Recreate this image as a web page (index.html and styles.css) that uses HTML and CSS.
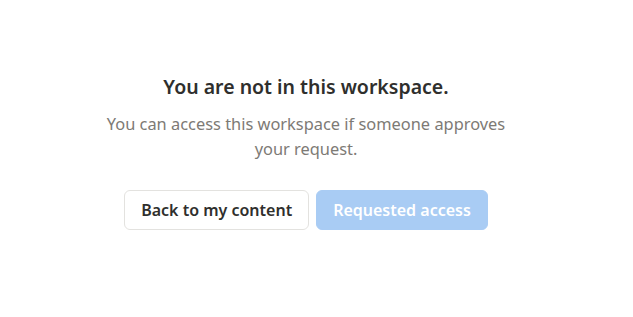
FILE: index.html
```html
<!DOCTYPE html>
<html lang="en">
<head>
    <meta charset="UTF-8">
    <meta name="viewport" content="width=device-width, initial-scale=1.0">
    <title>Workspace access</title>
    <link rel="stylesheet" href="styles.css">
</head>
<body>
    <div class="notice">
        <h1 class="title">You are not in this workspace.</h1>
        <p class="subtitle">You can access this workspace if someone approves your request.</p>
        <div class="actions">
            <button class="btn btn-back">Back to my content</button>
            <button class="btn btn-requested" disabled>Requested access</button>
        </div>
    </div>
</body>
</html>
```

FILE: styles.css
```css
body {
    margin: 0;
    padding-right: 21px;
    background-color: #ffffff;
    font-family: 'Noto Sans', sans-serif;
}
.notice {
    width: 420px;
    margin: 0 auto;
    padding-top: 73px;
    text-align: center;
}
.title {
    margin: 0;
    font-size: 19.5px;
    font-weight: 600;
    line-height: 28px;
    color: #2f2f2d;
}
.subtitle {
    margin: 10px 0 0;
    font-size: 16.4px;
    line-height: 25px;
    color: #7d7a75;
}
.actions {
    display: flex;
    justify-content: center;
    gap: 7px;
    margin-top: 29px;
}
.btn {
    height: 40px;
    padding: 0 16px;
    border-radius: 6px;
    font-family: inherit;
    font-size: 16px;
    font-weight: 600;
}
.btn-back {
    background-color: #ffffff;
    border: 1px solid #e3e2df;
    color: #2f2f2d;
}
.btn-requested {
    background-color: #a9ccf4;
    border: 1px solid #a9ccf4;
    color: #ffffff;
}
```
